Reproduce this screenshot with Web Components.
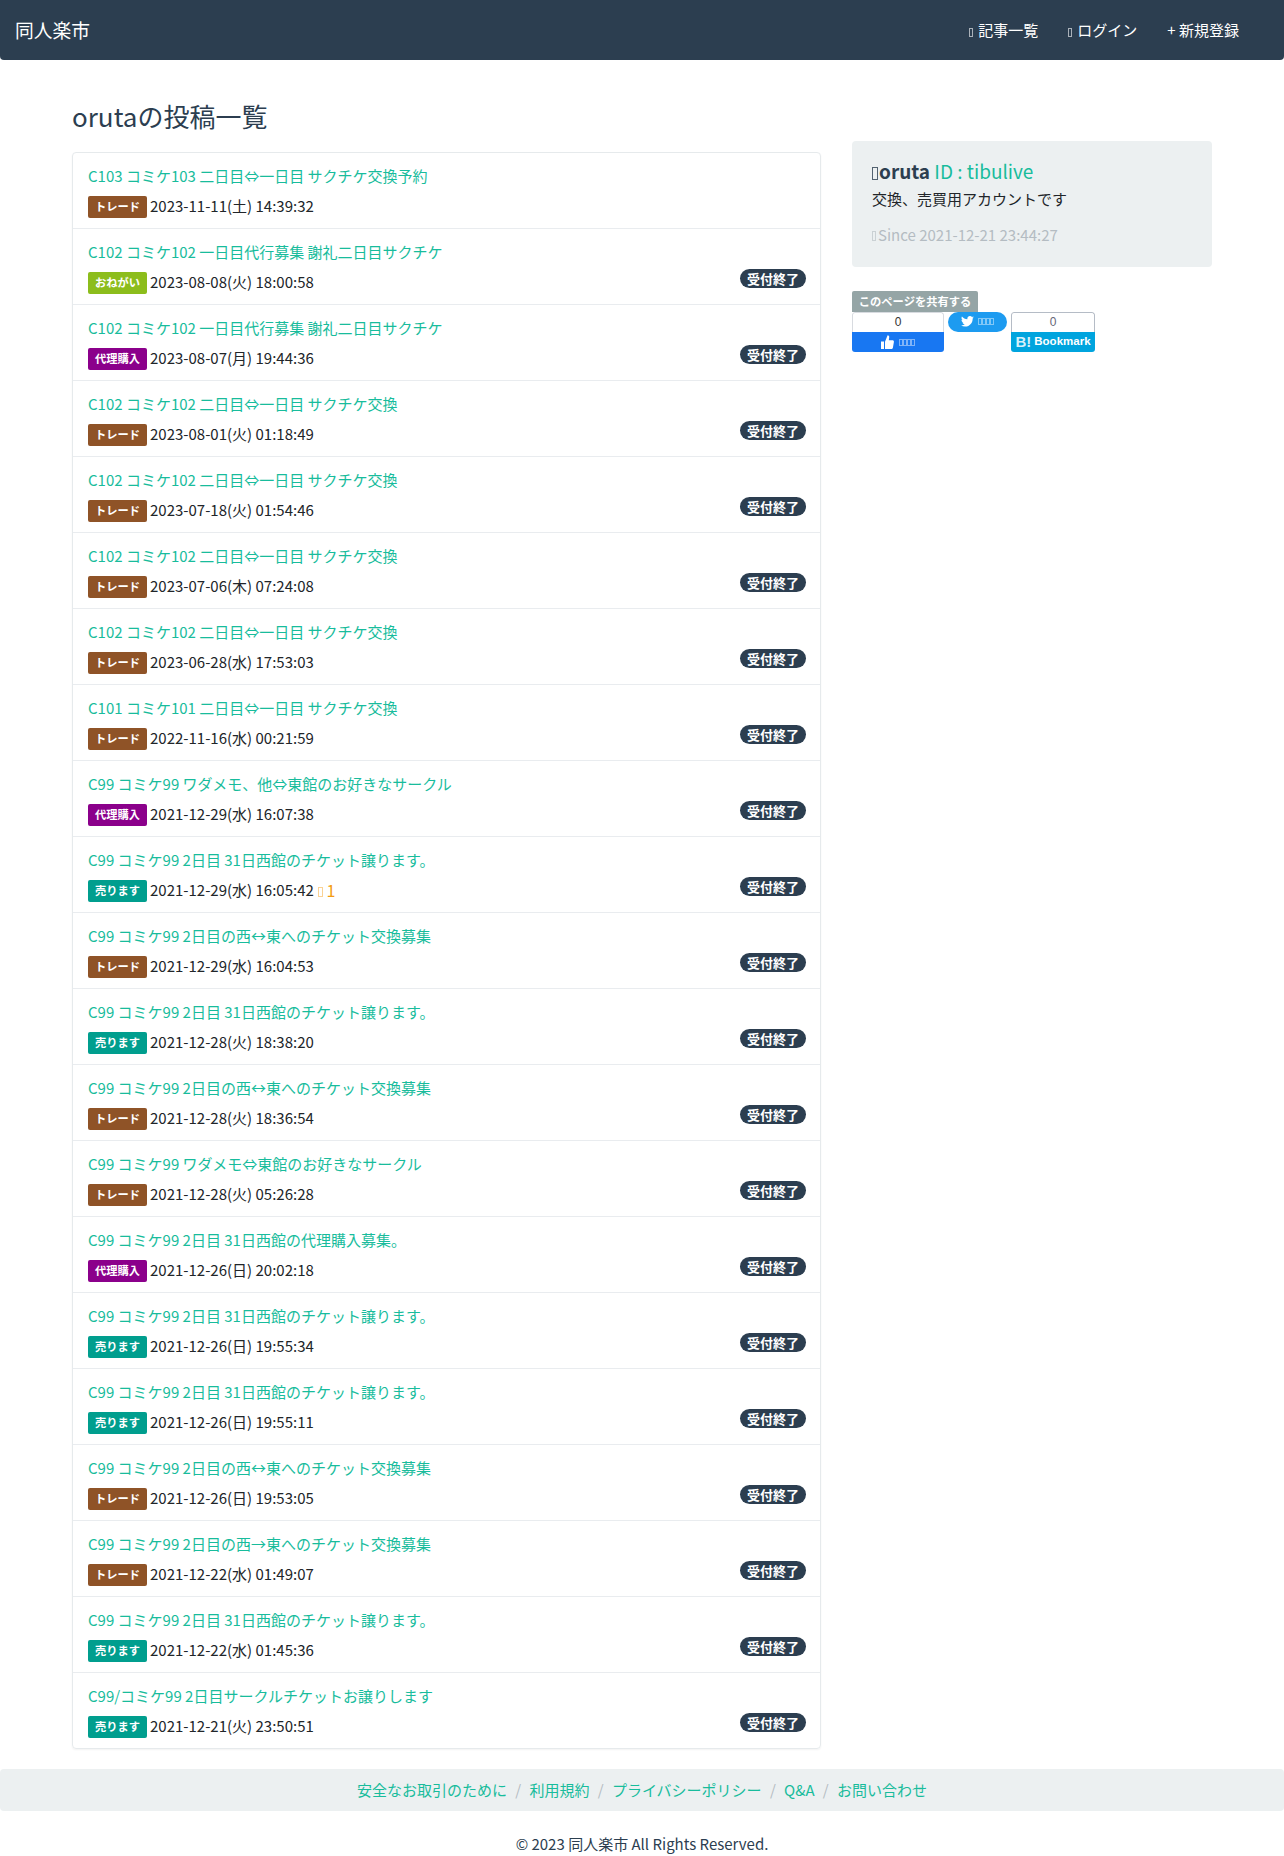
<!DOCTYPE html>
<html lang="ja">
<head>
<meta charset="utf-8">
<title>同人楽市</title>
<style>
  html, body { margin: 0; padding: 0; background: #fff; }
  body { font: 15px/1.5 "Noto Sans CJK JP", sans-serif; color: #212529; }
  .page { display: grid; grid-template-columns: 749px 360px; column-gap: 31px; padding: 0 72px; }
</style>
</head>
<body>
<site-nav></site-nav>
<div class="page">
  <post-list></post-list>
  <side-bar></side-bar>
</div>
<site-footer></site-footer>

<script>
const FONT = `"Noto Sans CJK JP", sans-serif`;

// the empty box a missing icon font leaves behind
class NoGlyph extends HTMLElement {
    constructor() {
        super();
        this.attachShadow({mode: "open"}).innerHTML = `
        <style>
            :host { display: inline-block; box-sizing: border-box; flex: none; width: var(--w, 4px); height: var(--h, 10px);
                    border: 1px solid currentColor; opacity: var(--o, .6); margin: var(--m, 0); vertical-align: var(--v, baseline); }
        </style>`;
    }
}

class SiteNav extends HTMLElement {
    constructor() {
        super();
        this.attachShadow({mode: "open"}).innerHTML = `
        <style>
            :host { display: flex; justify-content: space-between; align-items: center; height: 60px; padding: 0 45px 0 15px; box-sizing: border-box;
                    background: #2c3e50; color: #fff; border-radius: 0 0 4px 4px; font-family: ${FONT}; }
            .brand { font-size: 18.75px; line-height: 28px; }
            nav { display: flex; gap: 30px; font-size: 15px; padding-top: 1px; }
            nav a { color: #fff; display: flex; align-items: center; gap: 5px; }
            no-glyph { --m: 3px 0 0; --h: 9px; }
        </style>
        <div class="brand">同人楽市</div>
        <nav>
            <a><no-glyph></no-glyph>記事一覧</a>
            <a><no-glyph></no-glyph>ログイン</a>
            <a>+ 新規登録</a>
        </nav>`;
    }
}

const KINDS = {
    trade: ["トレード", "#8f5327"],
    ask: ["おねがい", "#8cbd1c"],
    proxy: ["代理購入", "#8b008b"],
    sell: ["売ります", "#009e8e"]
};

class PostItem extends HTMLElement {
    constructor() {
        super();
        this.attachShadow({mode: "open"});
    }
    connectedCallback() {
        const kind = KINDS[this.getAttribute("kind")];
        const fav = this.getAttribute("fav");
        this.shadowRoot.innerHTML = `
        <style>
            :host { display: block; padding: 12px 15px 0; border-top: 1px solid #e9ecef; height: 63px; }
            :host(:first-child) { border-top: 0; }
            a { display: block; color: #18bc9c; line-height: 22px; margin-bottom: 8.5px; }
            .meta { display: flex; align-items: flex-start; line-height: 20px; color: #212529; }
            .kind { flex: none; width: 59px; height: 22px; margin-right: 3px; border-radius: 2px; color: #fff; background: ${kind[1]};
                    font-size: 11.25px; font-weight: 700; line-height: 21px; text-align: center; }
            .fav { color: #f39c12; margin-left: 4px; font-size: 16px; }
            no-glyph { --w: 5px; --o: .45; --h: 10px; }
            .closed { margin: -3px -1px 0 auto; height: 19px; padding: 0 7px; border-radius: 10px; background: #2c3e50; color: #fff;
                      font-size: 13px; font-weight: 700; line-height: 19px; }
        </style>
        <a><slot></slot></a>
        <div class="meta">
            <span class="kind">${kind[0]}</span>
            <span>${this.getAttribute("date")}</span>
            ${fav ? `<span class="fav"><no-glyph></no-glyph> ${fav}</span>` : ""}
            ${this.hasAttribute("open") ? "" : `<span class="closed">受付終了</span>`}
        </div>`;
    }
}

const T102A = "C102 コミケ102 一日目代行募集 謝礼二日目サクチケ";
const T102B = "C102 コミケ102 二日目⇔一日目 サクチケ交換";
const TSELL = "C99 コミケ99 2日目 31日西館のチケット譲ります。";
const TSWAP = "C99 コミケ99 2日目の西↔東へのチケット交換募集";

const POSTS = [
    ["C103 コミケ103 二日目⇔一日目 サクチケ交換予約", "trade", "2023-11-11(土) 14:39:32", {open: true}],
    [T102A, "ask", "2023-08-08(火) 18:00:58"],
    [T102A, "proxy", "2023-08-07(月) 19:44:36"],
    [T102B, "trade", "2023-08-01(火) 01:18:49"],
    [T102B, "trade", "2023-07-18(火) 01:54:46"],
    [T102B, "trade", "2023-07-06(木) 07:24:08"],
    [T102B, "trade", "2023-06-28(水) 17:53:03"],
    ["C101 コミケ101 二日目⇔一日目 サクチケ交換", "trade", "2022-11-16(水) 00:21:59"],
    ["C99 コミケ99 ワダメモ、他⇔東館のお好きなサークル", "proxy", "2021-12-29(水) 16:07:38"],
    [TSELL, "sell", "2021-12-29(水) 16:05:42", {fav: "1"}],
    [TSWAP, "trade", "2021-12-29(水) 16:04:53"],
    [TSELL, "sell", "2021-12-28(火) 18:38:20"],
    [TSWAP, "trade", "2021-12-28(火) 18:36:54"],
    ["C99 コミケ99 ワダメモ⇔東館のお好きなサークル", "trade", "2021-12-28(火) 05:26:28"],
    ["C99 コミケ99 2日目 31日西館の代理購入募集。", "proxy", "2021-12-26(日) 20:02:18"],
    [TSELL, "sell", "2021-12-26(日) 19:55:34"],
    [TSELL, "sell", "2021-12-26(日) 19:55:11"],
    [TSWAP, "trade", "2021-12-26(日) 19:53:05"],
    ["C99 コミケ99 2日目の西→東へのチケット交換募集", "trade", "2021-12-22(水) 01:49:07"],
    [TSELL, "sell", "2021-12-22(水) 01:45:36"],
    ["C99/コミケ99 2日目サークルチケットお譲りします", "sell", "2021-12-21(火) 23:50:51"]
];

class PostList extends HTMLElement {
    constructor() {
        super();
        this.attachShadow({mode: "open"}).innerHTML = `
        <style>
            :host { display: block; font-family: ${FONT}; }
            h1 { margin: 0; padding: 40px 0 20px; font-size: 26px; font-weight: 400; line-height: 32px; color: #2c3e50; }
            .list { border: 1px solid #e6eaec; border-radius: 4px; box-shadow: 0 1px 2px rgba(0,0,0,.05); }
        </style>
        <h1>orutaの投稿一覧</h1>
        <div class="list"></div>`;
        const list = this.shadowRoot.querySelector(".list");
        POSTS.forEach(post => {
            const item = document.createElement("post-item");
            item.textContent = post[0];
            item.setAttribute("kind", post[1]);
            item.setAttribute("date", post[2]);
            const opts = post[3] || {};
            if (opts.open) item.setAttribute("open", "");
            if (opts.fav) item.setAttribute("fav", opts.fav);
            list.appendChild(item);
        });
    }
}

class SideBar extends HTMLElement {
    constructor() {
        super();
        this.attachShadow({mode: "open"}).innerHTML = `
        <style>
            :host { display: block; padding-top: 81px; font-family: ${FONT}; }
        </style>
        <profile-card></profile-card>
        <share-box></share-box>`;
    }
}

class ProfileCard extends HTMLElement {
    constructor() {
        super();
        this.attachShadow({mode: "open"}).innerHTML = `
        <style>
            :host { display: block; box-sizing: border-box; height: 126px; padding: 16px 20px; background: #ecf0f1; border-radius: 4px; }
            .name { font-size: 19px; line-height: 28px; color: #18bc9c; }
            b { color: #2c3e50; }
            .name no-glyph { --w: 6px; --h: 13px; --o: .8; --v: -1px; --m: 0 1px 0 0; }
            .bio { margin-top: 3px; line-height: 22.5px; }
            .since { margin-top: 13px; line-height: 22.5px; color: #b4bcc2; }
            .since no-glyph { --m: 0 2px 0 0; }
        </style>
        <div class="name"><b><no-glyph></no-glyph>oruta</b> ID : tibulive</div>
        <div class="bio">交換、売買用アカウントです</div>
        <div class="since"><no-glyph></no-glyph>Since 2021-12-21 23:44:27</div>`;
    }
}

class ShareBox extends HTMLElement {
    constructor() {
        super();
        this.attachShadow({mode: "open"}).innerHTML = `
        <style>
            :host { display: block; margin-top: 24px; font-family: "Liberation Sans", ${FONT}; }
            .label { width: 126px; height: 21px; background: #95a5a6; color: #fff; border-radius: 2px 2px 0 0;
                     font-family: ${FONT}; font-size: 11.25px; font-weight: 700; line-height: 21px; text-align: center; }
            .row { display: flex; align-items: flex-start; gap: 4px; }
            .fb, .hb { height: 40px; border-radius: 3px; overflow: hidden; }
            .fb { width: 92px; }
            .hb { width: 84px; }
            .count { height: 20px; box-sizing: border-box; border: 1px solid #d8dbe0; border-bottom: 0; border-radius: 3px 3px 0 0; background: #fff;
                     font-size: 12px; line-height: 19px; text-align: center; color: #333; }
            .hb .count { border-color: #b5bcc6; color: #667; }
            .act { height: 20px; display: flex; align-items: center; justify-content: center; color: #fff; }
            .fb .act { background: #1877f2; gap: 5px; }
            .hb .act { background: #00a4de; font-size: 11.500px; font-weight: 700; gap: 3px; }
            .hb .act b { font-size: 15px; color: #d6f0fa; }
            .tw { width: 59px; height: 19.500px; background: #1d9bf0; border-radius: 10px; color: #fff; display: flex; align-items: center; justify-content: center; gap: 4px; }
            .tofu { display: flex; color: #fff; }
            no-glyph { --w: 4.200px; --h: 7px; --o: .45; }
            svg { display: block; }
        </style>
        <div class="label">このページを共有する</div>
        <div class="row">
            <div class="fb">
                <div class="count">0</div>
                <div class="act">
                    <svg width="13" height="14" viewBox="0 0 13 14" fill="#fff"><path d="M0 6.500h3V14H0zM4 6.700 6.600.3c1.100 0 1.800.9 1.600 2.200L7.800 5.200h3.700c1 0 1.600.9 1.400 1.800l-1 5.700c-.2.800-.8 1.300-1.600 1.300H4z"/></svg>
                    <span class="tofu"><no-glyph></no-glyph><no-glyph></no-glyph><no-glyph></no-glyph><no-glyph></no-glyph></span>
                </div>
            </div>
            <div class="tw">
                <svg width="13" height="11" viewBox="0 0 24 20" fill="#fff"><path d="M24 2.400c-.9.4-1.800.7-2.800.8 1-.6 1.800-1.600 2.200-2.700-1 .6-2 1-3.100 1.200C19.300.7 18 0 16.600 0c-2.700 0-4.900 2.200-4.900 4.900 0 .4 0 .8.100 1.100C7.700 5.800 4.100 3.900 1.700.9c-.4.700-.7 1.600-.7 2.500 0 1.700.9 3.200 2.200 4.100-.8 0-1.600-.2-2.200-.6v.1c0 2.400 1.700 4.400 3.900 4.800-.4.100-.8.200-1.300.2-.3 0-.6 0-.9-.1.600 2 2.400 3.400 4.600 3.400-1.700 1.300-3.800 2.100-6.100 2.100-.4 0-.8 0-1.200-.1C2.200 18.300 4.800 19.200 7.500 19.200c9.100 0 14-7.500 14-14v-.6c1-.7 1.800-1.500 2.500-2.200z"/></svg>
                <span class="tofu"><no-glyph></no-glyph><no-glyph></no-glyph><no-glyph></no-glyph><no-glyph></no-glyph></span>
            </div>
            <div class="hb">
                <div class="count">0</div>
                <div class="act"><b>B!</b><span>Bookmark</span></div>
            </div>
        </div>`;
    }
}

class SiteFooter extends HTMLElement {
    constructor() {
        super();
        this.attachShadow({mode: "open"}).innerHTML = `
        <style>
            :host { display: block; margin-top: 20px; font-family: ${FONT}; }
            .crumbs { display: flex; justify-content: center; height: 41.500px; align-items: center; gap: 8.300px; background: #ecf0f1; border-radius: 4px; padding-top: 1px; box-sizing: border-box; }
            .crumbs a { color: #18bc9c; }
            .crumbs i { font-style: normal; color: #b4bcc2; }
            p { margin: 22.500px 0 0; text-align: center; color: #2c3e50; }
        </style>
        <div class="crumbs">
            <a>安全なお取引のために</a><i>/</i>
            <a>利用規約</a><i>/</i>
            <a>プライバシーポリシー</a><i>/</i>
            <a>Q&amp;A</a><i>/</i>
            <a>お問い合わせ</a>
        </div>
        <p>© 2023 同人楽市 All Rights Reserved.</p>`;
    }
}

customElements.define("no-glyph", NoGlyph);
customElements.define("site-nav", SiteNav);
customElements.define("post-item", PostItem);
customElements.define("post-list", PostList);
customElements.define("side-bar", SideBar);
customElements.define("profile-card", ProfileCard);
customElements.define("share-box", ShareBox);
customElements.define("site-footer", SiteFooter);
</script>
</body>
</html>
